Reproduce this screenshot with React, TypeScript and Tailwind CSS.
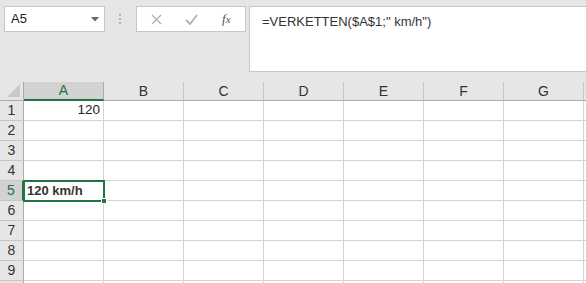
const COLS = ["A", "B", "C", "D", "E", "F", "G"];
const ROWS = [1, 2, 3, 4, 5, 6, 7, 8, 9, 10];

const cellText: Record<string, string> = {
	A1: "120",
	A5: "120 km/h",
};

function Toolbar() {
	return (
		<div className="flex h-[82px] items-start bg-[#e6e6e6] pt-[6px]">
			{/* Name box */}
			<div className="ml-[4px] flex h-[26px] w-[101px] items-center justify-between border border-[#c6c6c6] bg-white pl-[6px] pr-[5px] text-[13px] text-[#222]">
				<span>A5</span>
				<svg width="8" height="5" viewBox="0 0 8 5" className="mt-[1px]">
					<path d="M0 0h8L4 4.5z" fill="#666" />
				</svg>
			</div>
			{/* Separator dots */}
			<div className="ml-[14px] mt-[8px] flex w-[3px] flex-col gap-[2px]">
				<span className="h-[2px] w-[2px] bg-[#b5b5b5]" />
				<span className="h-[2px] w-[2px] bg-[#b5b5b5]" />
				<span className="h-[2px] w-[2px] bg-[#b5b5b5]" />
			</div>
			{/* Cancel / enter / fx */}
			<div className="ml-[14px] flex h-[26px] w-[110px] items-center border border-[#c6c6c6] bg-white">
				<svg width="11" height="11" viewBox="0 0 11 11" className="ml-[14px]">
					<path d="M1 1l9 9M10 1l-9 9" stroke="#b0b0b0" strokeWidth="1.3" />
				</svg>
				<svg width="13" height="11" viewBox="0 0 13 11" className="ml-[23px]">
					<path d="M1 6l4 4 7-9" stroke="#b0b0b0" strokeWidth="1.8" fill="none" />
				</svg>
				<span className="ml-[24px] font-['Liberation_Serif',serif] text-[13px] italic text-[#555]">
					f<span className="text-[11px]">x</span>
				</span>
			</div>
			{/* Formula bar */}
			<div className="ml-[3px] h-[66px] flex-1 border border-r-0 border-[#c6c6c6] bg-white pl-[12px] pt-[5px] text-[13px] text-[#333]">
				=VERKETTEN($A$1;" km/h")
			</div>
		</div>
	);
}

function Grid() {
	return (
		<div
			className="grid bg-white text-[14px] text-[#222]"
			style={{ gridTemplateColumns: "24px repeat(7, 80px) 1fr", gridTemplateRows: "19px repeat(10, 20px)" }}
		>
			{/* corner */}
			<div className="relative border-b border-r border-[#ababab] bg-[#e6e6e6]">
				<svg width="13" height="13" viewBox="0 0 13 13" className="absolute bottom-[3px] right-[3px]">
					<path d="M13 0v13H0z" fill="#c8c8c8" />
				</svg>
			</div>
			{COLS.map((c) => (
				<div
					key={c}
					className={
						c === "A"
							? "flex items-center justify-center border-b-2 border-r border-b-[#217346] border-r-[#ababab] bg-[#d2d2d2] text-[#217346]"
							: "flex items-center justify-center border-b border-r border-b-[#ababab] border-r-[#c6c6c6] bg-[#e6e6e6] text-[#333]"
					}
				>
					{c}
				</div>
			))}
			<div className="border-b border-[#ababab] bg-[#e6e6e6]" />
			{ROWS.map((r) => (
				<div key={r} className="contents">
					<div
						className={
							r === 5
								? "flex items-center justify-center border-b border-r-2 border-b-[#c6c6c6] border-r-[#217346] bg-[#d2d2d2] text-[#217346]"
								: "flex items-center justify-center border-b border-r border-b-[#c6c6c6] border-r-[#ababab] bg-[#e6e6e6] text-[#333]"
						}
					>
						{r < 10 ? r : ""}
					</div>
					{COLS.map((c) => {
						const id = `${c}${r}`;
						const txt = cellText[id];
						if (id === "A5") {
							return (
								<div key={id} className="relative border-b border-r border-[#d4d4d4]">
									<div className="absolute -left-[1px] -top-[1px] z-10 flex h-[22px] w-[82px] items-center border-2 border-[#217346] pl-[2px] text-[13px] font-bold text-[#333]">
										{txt}
									</div>
									<span className="absolute -bottom-[4px] -right-[4px] z-20 h-[6px] w-[6px] border border-white bg-[#217346]" />
								</div>
							);
						}
						return (
							<div
								key={id}
								className="flex items-center justify-end border-b border-r border-[#d4d4d4] pr-[3px] text-[13.5px]"
							>
								{txt}
							</div>
						);
					})}
					<div className="border-b border-[#d4d4d4]" />
				</div>
			))}
		</div>
	);
}

export default function App() {
	return (
		<div className="h-[283px] w-[586px] overflow-hidden bg-white font-['Liberation_Sans',Arial,sans-serif]">
			<Toolbar />
			<Grid />
		</div>
	);
}
